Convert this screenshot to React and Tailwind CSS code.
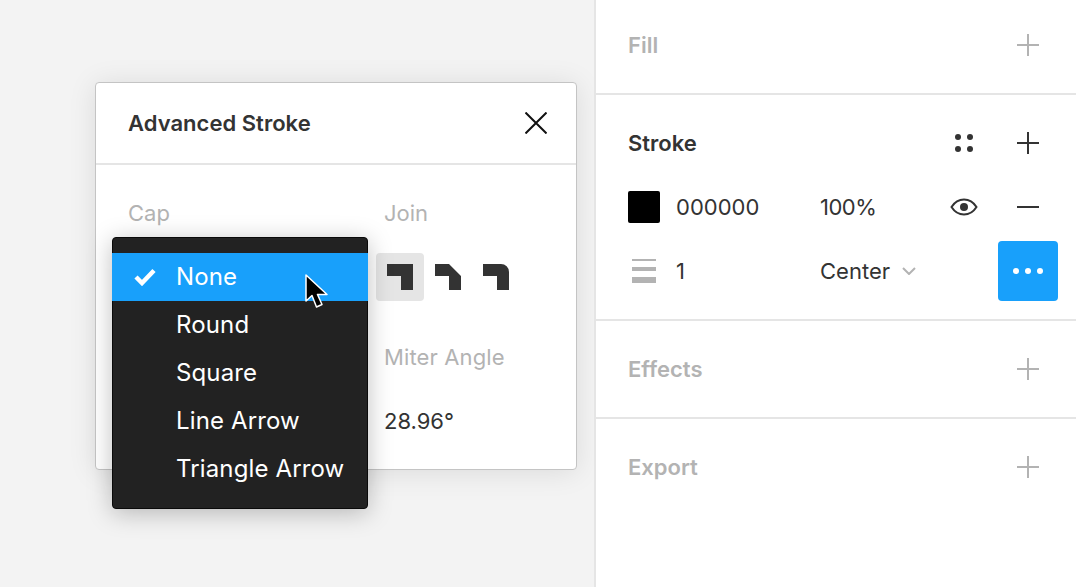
const font = { fontFamily: '"Inter", "Liberation Sans", sans-serif' };

function Plus({ dark }) {
  return (
    <svg width="22" height="22" viewBox="0 0 22 22" className={dark ? "text-[#333333]" : "text-[#b3b3b3]"}>
      <path d="M11 0V22M0 11H22" stroke="currentColor" strokeWidth="2" fill="none" />
    </svg>
  );
}

function PanelHead({ title, dark, extra }) {
  return (
    <div className="flex items-center h-[48px] pl-[32px] pr-[37px]">
      <span className={`text-[22px] font-semibold leading-[32px] ${dark ? "text-[#333333]" : "text-[#b3b3b3]"}`}>{title}</span>
      <div className="ml-auto flex items-center">
        {extra}
        <Plus dark={dark} />
      </div>
    </div>
  );
}

function Label({ children }) {
  return <div className="text-[22px] leading-[32px] text-[#b3b3b3]">{children}</div>;
}

function JoinIcon({ d }) {
  return (
    <svg width="26" height="26" viewBox="0 0 26 26">
      <path d={d} fill="#333333" />
    </svg>
  );
}

const items = ["None", "Round", "Square", "Line Arrow", "Triangle Arrow"];

export default function App() {
  return (
    <div style={font} className="flex w-[1076px] h-[587px] overflow-hidden bg-white">
      <div className="relative w-[594px] shrink-0 overflow-hidden bg-[#f3f3f3]">
        <div className="absolute left-[95px] top-[82px] w-[482px] h-[388px] bg-white rounded-[4px] border border-[#c4c4c4] shadow-[0_2px_28px_rgba(0,0,0,0.1)]">
          <div className="flex items-center h-[82px] pl-[32px] pr-[29px] border-b-2 border-[#e5e5e5]">
            <span className="text-[22px] font-semibold text-[#333333] tracking-[0.03px]">Advanced Stroke</span>
            <svg className="ml-auto" width="22" height="22" viewBox="0 0 22 22">
              <path d="M0.5 0.5L21.5 21.5M21.5 0.5L0.5 21.5" stroke="#111111" strokeWidth="2" fill="none" />
            </svg>
          </div>
          <div className="grid grid-cols-[256px_1fr] pl-[32px] pt-[32px]">
            <Label>Cap</Label>
            <Label>Join</Label>
            <div className="h-[112px]" />
            <div className="h-[112px] pt-[24px] -ml-[8px] flex">
              <div className="w-[48px] h-[48px] rounded-[4px] bg-[#e5e5e5] flex items-center justify-center">
                <JoinIcon d="M0 0H26V26H14V12H0Z" />
              </div>
              <div className="w-[48px] h-[48px] flex items-center justify-center">
                <JoinIcon d="M0 0H14L26 12V26H14V12H0Z" />
              </div>
              <div className="w-[48px] h-[48px] flex items-center justify-center">
                <JoinIcon d="M0 0H18A8 8 0 0 1 26 8V26H14V12H0Z" />
              </div>
            </div>
            <div />
            <div>
              <div className="tracking-[0.13px]"><Label>Miter Angle</Label></div>
              <div className="text-[22px] leading-[32px] text-[#333333] mt-[32px]">28.96°</div>
            </div>
          </div>
        </div>

        <div className="absolute left-[112px] top-[237px] w-[256px] h-[272px] py-[15px] bg-[#222222] rounded-[4px] border border-[#0a0a0a] shadow-[0_4px_24px_rgba(0,0,0,0.25)]">
          {items.map((item, i) => (
            <div
              key={item}
              className={`flex items-center h-[48px] -mx-px text-[24px] tracking-[0.13px] text-white ${i === 0 ? "bg-[#18a0fb]" : ""}`}
            >
              <div className="w-[64px] flex pl-[22px] shrink-0">
                {i === 0 && (
                  <svg width="22" height="18" viewBox="0 0 22 18">
                    <path d="M2 9L8 15L20 2.5" stroke="#ffffff" strokeWidth="4.5" fill="none" />
                  </svg>
                )}
              </div>
              <span>{item}</span>
            </div>
          ))}
        </div>

        <svg className="absolute left-[304px] top-[274px]" width="26" height="36" viewBox="0 0 26 36">
          <path d="M2 1V27L8 21.5L12.5 33L18 30.5L13.5 20.5H23Z" fill="#000000" stroke="#ffffff" strokeWidth="1.5" strokeLinejoin="round" />
        </svg>
      </div>

      <div className="flex-1 border-l-2 border-[#e5e5e5] bg-white">
        <section className="h-[95px] pt-[21px] border-b-2 border-[#e5e5e5]">
          <PanelHead title="Fill" />
        </section>

        <section className="h-[226px] pt-[24px] border-b-2 border-[#e5e5e5]">
          <PanelHead
            title="Stroke"
            dark
            extra={
              <svg className="mr-[44px]" width="18" height="18" viewBox="0 0 18 18">
                <circle cx="3" cy="3" r="3" fill="#333333" />
                <circle cx="15" cy="3" r="3" fill="#333333" />
                <circle cx="3" cy="15" r="3" fill="#333333" />
                <circle cx="15" cy="15" r="3" fill="#333333" />
              </svg>
            }
          />
          <div className="flex items-center h-[64px] mt-[8px] pl-[32px] pr-[37px] text-[22px] text-[#333333]">
            <div className="w-[32px] h-[32px] bg-black rounded-[2px] shrink-0" />
            <span className="ml-[16px] w-[144px]">000000</span>
            <span className="tracking-[-0.5px]">100%</span>
            <svg className="ml-auto mr-[39px]" width="28" height="20" viewBox="0 0 28 20">
              <path d="M1.5 10C5 4.5 9 2.5 14 2.5S23 4.5 26.5 10C23 15.5 19 17.5 14 17.5S5 15.5 1.5 10Z" stroke="#333333" strokeWidth="2" fill="none" />
              <circle cx="14" cy="10" r="4" fill="#333333" />
            </svg>
            <svg width="22" height="2" viewBox="0 0 22 2">
              <path d="M0 1H22" stroke="#333333" strokeWidth="2" />
            </svg>
          </div>
          <div className="flex items-center h-[64px] pl-[36px] pr-[18px] text-[22px] text-[#333333]">
            <svg className="shrink-0" width="24" height="24" viewBox="0 0 24 24">
              <rect x="0" y="0" width="24" height="2" fill="#b3b3b3" />
              <rect x="0" y="8" width="24" height="4" fill="#b3b3b3" />
              <rect x="0" y="18" width="24" height="6" fill="#b3b3b3" />
            </svg>
            <span className="ml-[20px] w-[144px]">1</span>
            <span>Center</span>
            <svg className="ml-[12px]" width="14" height="8" viewBox="0 0 14 8">
              <path d="M1 1L7 7L13 1" stroke="#b3b3b3" strokeWidth="2" fill="none" />
            </svg>
            <div className="ml-auto w-[60px] h-[60px] rounded-[4px] bg-[#18a0fb] flex items-center justify-center gap-[6px]">
              <span className="w-[6px] h-[6px] rounded-full bg-white" />
              <span className="w-[6px] h-[6px] rounded-full bg-white" />
              <span className="w-[6px] h-[6px] rounded-full bg-white" />
            </div>
          </div>
        </section>

        <section className="h-[98px] pt-[24px] border-b-2 border-[#e5e5e5]">
          <PanelHead title="Effects" />
        </section>

        <section className="pt-[24px]">
          <PanelHead title="Export" />
        </section>
      </div>
    </div>
  );
}
